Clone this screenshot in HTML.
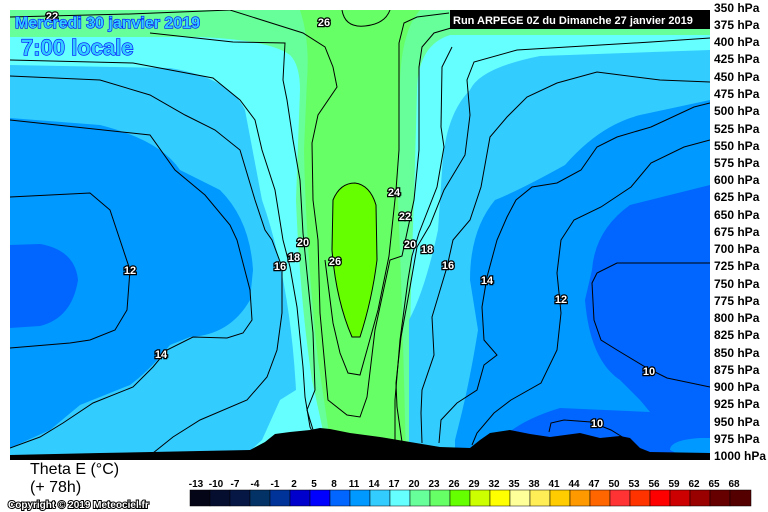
<!DOCTYPE html>
<html><head><meta charset="utf-8"><style>
body{margin:0;background:#fff;width:768px;height:512px;overflow:hidden;font-family:"Liberation Sans",sans-serif}
svg{position:absolute;left:0;top:0}
</style></head><body>
<svg width="768" height="512" viewBox="0 0 768 512" xmlns="http://www.w3.org/2000/svg">
<defs><clipPath id="c"><rect x="10" y="10" width="700" height="450"/></clipPath></defs>
<g clip-path="url(#c)">
<rect x="10" y="10" width="700" height="450" fill="#66ff66"/>
<path d="M10,10 L300,10 Q310,40 307,80 L304,150 Q306,250 318,360 L330,440 L330,460 L10,460Z" fill="#66ff99"/>
<path d="M10,37 L200,37 Q270,40 290,55 Q300,65 300,90 L296,200 Q300,300 312,380 L325,440 L325,460 L10,460Z" fill="#66ffff"/>
<path d="M10,65 L170,68 Q230,78 245,110 L262,200 Q290,280 296,390 L280,400 L262,440 L240,460 L10,460Z" fill="#33ccff"/>
<path d="M10,118 L100,125 Q160,140 180,170 L220,190 Q250,220 253,270 L250,300 Q230,335 190,337 L170,345 Q150,370 130,385 L80,405 L50,430 L10,448Z" fill="#0099ff"/>
<path d="M10,245 L40,244 Q75,250 78,280 Q72,318 40,326 L10,328Z" fill="#0066ff"/>
<path d="M710,10 L420,10 Q402,30 400,80 L398,200 Q402,300 404,380 L406,460 L710,460Z" fill="#66ff99"/>
<path d="M710,35 L450,35 Q418,45 417,90 L414,200 Q410,300 410,360 L410,460 L710,460Z" fill="#66ffff"/>
<path d="M710,50 L540,56 Q480,68 470,90 Q445,115 442,170 L438,230 Q425,290 409,320 L409,460 L710,460Z" fill="#33ccff"/>
<path d="M710,100 L640,115 Q600,125 565,165 Q520,190 495,200 Q470,230 470,280 L478,330 Q470,380 460,420 L455,440 L455,460 L710,460Z" fill="#0099ff"/>
<path d="M710,185 L630,205 Q595,230 592,270 L585,300 Q590,360 620,380 L640,400 L650,412 L560,408 Q520,420 500,440 L500,460 L690,460 L670,450 Q670,440 700,438 L710,438Z" fill="#0066ff"/>
<path d="M333,200 Q340,183 355,183 Q370,185 376,205 L377,260 Q372,300 360,337 L352,337 Q336,300 332,250Z" fill="#66ff00"/>
<g fill="none" stroke="#000" stroke-width="1">
<!-- left lines -->
<path d="M10,17 L130,14 L230,10"/>
<path d="M230,10 L303,33 L325,47 L333,67 L337,87 L318,115 L312,143 L313,200 L318,240 L320,313 L328,400 L347,415 L360,417 L367,397 L375,330 L390,260 L402,256 L414,200 L419,150 L419,67 L422,47 L434,33 L451,28"/>
<path d="M150,33 L233,42 L285,43 L283,80 L287,100 L293,140 L300,180 L303,233 L307,273 L313,333 L315,390 L307,410 L310,420 L314,433"/>
<path d="M10,60 L133,63 L213,78 L240,100 L255,120 L262,150 L275,190 L283,240 L290,267 L297,307 L303,367 L305,397 L310,427 L313,433"/>
<path d="M10,76 L100,80 L150,95 L185,115 L215,130 L240,150 L255,200 L265,230 L272,240 L282,267 L282,313 L277,350 L267,377 L247,400 L200,420 L173,437 L153,453"/>
<path d="M10,120 L150,135 L175,170 L205,195 L230,225 L237,240 L250,290 L252,320 L243,333 L227,338 L193,337 L167,350 L153,367 L133,387 L93,403 L63,423 L40,437 L10,448"/>
<path d="M10,197 L90,193 L110,210 L120,240 L130,270 L127,310 L115,330 L90,340 L70,343 L10,348"/>
<!-- center -->
<path d="M333,200 Q340,183 355,183 Q370,185 376,205 L377,260 Q372,300 360,337 L352,337 Q336,300 332,250Z"/>
<path d="M325,260 L333,323 L340,353 L348,373 L360,375 L367,350 L378,310 L389,256 L396,190 L399,150 L399,43 L404,23 L417,17 L449,13"/>
<path d="M342,10 Q345,28 365,26 Q385,24 390,10"/>
<!-- right lines -->
<path d="M452,47 L442,67 L441,127 L444,147 L437,187 L419,233 L412,256 L408,280 L400,340 L395,400 L395,440"/>
<path d="M710,38 L651,42 L517,50 L474,62 L467,80 L470,115 L465,155 L444,190 L430,225 L417,247 L409,293 L401,337 L396,383 L397,407 L402,442"/>
<path d="M710,82 L660,80 L597,72 L557,83 L527,97 L507,117 L490,137 L481,187 L470,220 L453,240 L447,267 L432,317 L434,355 L422,390 L421,413 L422,443"/>
<path d="M710,103 L694,107 L651,127 L617,137 L597,147 L581,170 L557,183 L532,187 L516,200 L507,217 L497,240 L487,277 L482,307 L484,340 L497,355 L484,365 L477,390 L457,403 L441,420 L439,443"/>
<path d="M710,140 L684,147 L651,163 L631,187 L601,207 L574,220 L561,240 L557,273 L561,313 L557,350 L541,383 L511,400 L494,413 L477,433 L472,445"/>
<path d="M710,263 L617,263 L597,273 L592,283 L594,320 L601,340 L617,350 L647,368 L667,378 L710,387"/>
<path d="M549,432 L551,423 L564,420 L591,422 L611,430 L624,438"/>
</g>
<path d="M10,455 L100,453 L200,451 L250,450 L265,442 L275,434 L290,432 L310,430 L320,428 L330,429 L350,433 L380,437 L410,442 L440,447 L470,448 L480,440 L490,433 L510,430 L530,434 L550,437 L580,433 L600,438 L620,436 L630,438 L640,448 L650,452 L710,453 L710,460 L10,460Z" fill="#000"/>
</g>
<g font-size="11" font-weight="bold" fill="#fff" stroke="#000" stroke-width="2.5" paint-order="stroke" text-anchor="middle">
<text x="324" y="26">26</text><text x="52" y="20">22</text>
<text x="394" y="196">24</text><text x="405" y="220">22</text>
<text x="303" y="246">20</text><text x="410" y="248">20</text>
<text x="294" y="261">18</text><text x="427" y="253">18</text>
<text x="335" y="265">26</text><text x="280" y="270">16</text>
<text x="448" y="269">16</text><text x="130" y="274">12</text>
<text x="487" y="284">14</text><text x="561" y="303">12</text>
<text x="161" y="358">14</text><text x="649" y="375">10</text>
<text x="597" y="427">10</text>
</g>
<g font-weight="bold" fill="#33ccff" stroke="#0000ff" stroke-width="1.2" paint-order="stroke">
<text x="15" y="28" font-size="16">Mercredi 30 janvier 2019</text>
<text x="21" y="55" font-size="22">7:00 locale</text>
</g>
<rect x="450" y="10" width="260" height="19" fill="#000"/>
<text x="453" y="24" font-size="11" font-weight="bold" fill="#fff">Run ARPEGE 0Z du Dimanche 27 janvier 2019</text>
<g font-size="12" font-weight="bold" fill="#000">
<text x="714" y="12">350 hPa</text><text x="714" y="29">375 hPa</text><text x="714" y="46">400 hPa</text><text x="714" y="63">425 hPa</text><text x="714" y="81">450 hPa</text><text x="714" y="98">475 hPa</text><text x="714" y="115">500 hPa</text><text x="714" y="133">525 hPa</text><text x="714" y="150">550 hPa</text><text x="714" y="167">575 hPa</text><text x="714" y="184">600 hPa</text><text x="714" y="201">625 hPa</text><text x="714" y="219">650 hPa</text><text x="714" y="236">675 hPa</text><text x="714" y="253">700 hPa</text><text x="714" y="270">725 hPa</text><text x="714" y="288">750 hPa</text><text x="714" y="305">775 hPa</text><text x="714" y="322">800 hPa</text><text x="714" y="339">825 hPa</text><text x="714" y="357">850 hPa</text><text x="714" y="374">875 hPa</text><text x="714" y="391">900 hPa</text><text x="714" y="408">925 hPa</text><text x="714" y="426">950 hPa</text><text x="714" y="443">975 hPa</text><text x="714" y="460">1000 hPa</text>
</g>
<text x="30" y="474" font-size="16" fill="#000">Theta E (°C)</text>
<text x="30" y="492" font-size="16" fill="#000">(+ 78h)</text>
<text x="8" y="508" font-size="10" font-weight="bold" fill="#fff" stroke="#000" stroke-width="2" paint-order="stroke">Copyright © 2019 Meteociel.fr</text>
<g stroke="#000" stroke-width="0.5">
<rect x="190" y="490" width="20" height="16" fill="#050518"/><rect x="210" y="490" width="20" height="16" fill="#060e30"/><rect x="230" y="490" width="20" height="16" fill="#061645"/><rect x="250" y="490" width="20" height="16" fill="#033366"/><rect x="270" y="490" width="20" height="16" fill="#003399"/><rect x="290" y="490" width="20" height="16" fill="#0000cc"/><rect x="310" y="490" width="20" height="16" fill="#0000ff"/><rect x="330" y="490" width="20" height="16" fill="#0066ff"/><rect x="350" y="490" width="20" height="16" fill="#0099ff"/><rect x="370" y="490" width="20" height="16" fill="#33ccff"/><rect x="390" y="490" width="20" height="16" fill="#66ffff"/><rect x="410" y="490" width="20" height="16" fill="#66ff99"/><rect x="430" y="490" width="20" height="16" fill="#66ff66"/><rect x="450" y="490" width="20" height="16" fill="#66ff00"/><rect x="470" y="490" width="20" height="16" fill="#ccff00"/><rect x="490" y="490" width="20" height="16" fill="#ffff00"/><rect x="510" y="490" width="20" height="16" fill="#ffff99"/><rect x="530" y="490" width="20" height="16" fill="#ffee55"/><rect x="550" y="490" width="20" height="16" fill="#ffcc00"/><rect x="570" y="490" width="20" height="16" fill="#ff9900"/><rect x="590" y="490" width="20" height="16" fill="#ff6600"/><rect x="610" y="490" width="20" height="16" fill="#ff3333"/><rect x="630" y="490" width="20" height="16" fill="#ff3300"/><rect x="650" y="490" width="20" height="16" fill="#ff0000"/><rect x="670" y="490" width="20" height="16" fill="#cc0000"/><rect x="690" y="490" width="20" height="16" fill="#990000"/><rect x="710" y="490" width="20" height="16" fill="#660000"/><rect x="730" y="490" width="21" height="16" fill="#550000"/>
</g>
<g font-size="10" font-weight="bold" fill="#000" text-anchor="middle">
<text x="196" y="487">-13</text><text x="216" y="487">-10</text><text x="235" y="487">-7</text><text x="255" y="487">-4</text><text x="275" y="487">-1</text><text x="294" y="487">2</text><text x="314" y="487">5</text><text x="334" y="487">8</text><text x="354" y="487">11</text><text x="374" y="487">14</text><text x="394" y="487">17</text><text x="414" y="487">20</text><text x="434" y="487">23</text><text x="454" y="487">26</text><text x="474" y="487">29</text><text x="494" y="487">32</text><text x="514" y="487">35</text><text x="534" y="487">38</text><text x="554" y="487">41</text><text x="574" y="487">44</text><text x="594" y="487">47</text><text x="614" y="487">50</text><text x="634" y="487">53</text><text x="654" y="487">56</text><text x="674" y="487">59</text><text x="694" y="487">62</text><text x="714" y="487">65</text><text x="734" y="487">68</text>
</g>
</svg>
</body></html>
